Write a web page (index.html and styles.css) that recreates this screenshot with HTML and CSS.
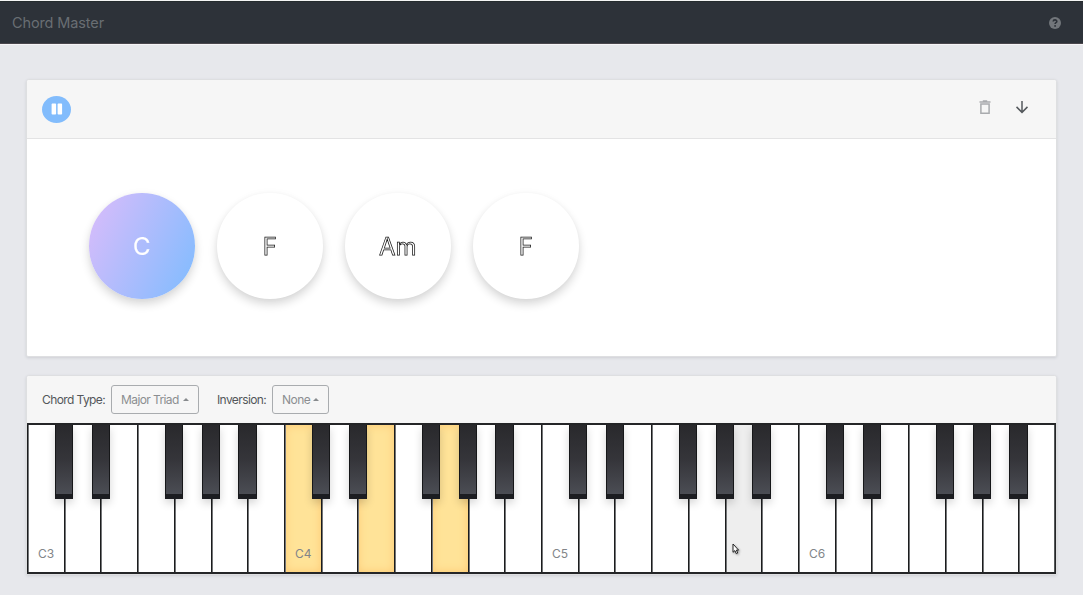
FILE: index.html
```html
<!DOCTYPE html>
<html lang="en">
<head>
<meta charset="utf-8">
<title>Chord Master</title>
<link rel="stylesheet" href="styles.css">
</head>
<body>
<header class="navbar">
  <span class="brand">Chord Master</span>
  <svg class="help" viewBox="0 0 12 12"><circle cx="6" cy="6" r="6"/><path d="M4.2 4.5C4.3 2.3 7.9 2.4 7.8 4.6C7.7 5.7 6.1 5.7 6.1 7"/><circle class="dot" cx="6.1" cy="8.9" r=".95"/></svg>
</header>
<main class="page">
  <section class="card">
    <div class="toolbar">
      <button class="pause" aria-label="Pause"><svg viewBox="0 0 12 12"><rect x=".6" y=".6" width="4.5" height="11" rx=".8"/><rect x="6.6" y=".6" width="4.5" height="11" rx=".8"/></svg></button>
      <div class="actions">
        <svg class="trash" viewBox="0 0 12 14"><path d="M.5 1.9H11.5M3.8 .9H8.2M1.9 4V13.2H10.1V4Z"/></svg>
        <svg class="arrow" viewBox="0 0 12 14"><path d="M6 1V12.4M.5 6.9L6 12.4L11.5 6.9"/></svg>
      </div>
    </div>
    <div class="chords">
      <div class="chord playing">C</div>
      <div class="chord">F</div>
      <div class="chord">Am</div>
      <div class="chord">F</div>
    </div>
  </section>
  <section class="card">
    <div class="options">
      <span class="label">Chord Type:</span><button class="select type">Major Triad<i class="caret"></i></button>
      <span class="label inversion">Inversion:</span><button class="select none">None<i class="caret"></i></button>
    </div>
    <div class="piano">
      <div class="key sharp">C3</div><div class="key sharp"></div><div class="key"></div><div class="key sharp"></div><div class="key sharp"></div><div class="key sharp"></div><div class="key"></div>
      <div class="key sharp on">C4</div><div class="key sharp"></div><div class="key on"></div><div class="key sharp"></div><div class="key sharp on"></div><div class="key sharp"></div><div class="key"></div>
      <div class="key sharp">C5</div><div class="key sharp"></div><div class="key"></div><div class="key sharp"></div><div class="key sharp"></div><div class="key sharp hover"><svg class="cursor" viewBox="0 0 8 12"><path d="M1 1V9.3L2.9 7.6L4.3 10.7L5.7 10L4.4 7.1H6.6Z"/></svg></div><div class="key"></div>
      <div class="key sharp">C6</div><div class="key sharp"></div><div class="key"></div><div class="key sharp"></div><div class="key sharp"></div><div class="key sharp"></div><div class="key"></div>
    </div>
  </section>
</main>
</body>
</html>
```
FILE: styles.css
```css
*, *::after { box-sizing: border-box; }
body { margin: 0; height: 595px; overflow: hidden; background: #e7e8ec; font-family: Inter, "Liberation Sans", sans-serif; color: #53565a; }
button { font: inherit; padding: 0; margin: 0; }
.navbar { height: 45px; padding: 0 22px 0 12px; display: flex; align-items: center; justify-content: space-between; background: #2d3239; border-top: 1px solid #f4f5f5; border-bottom: 1px solid #f6f4f6; box-shadow: inset 0 1px #252c2e, inset 0 -1px #4a474d; }
.brand { color: #696e73; font-size: 14.5px; letter-spacing: -.12px; }
.help { width: 12px; height: 12px; fill: #72767b; }
.help path { fill: none; stroke: #2d3239; stroke-width: 1.6; }
.help .dot { fill: #2d3239; }
.page { padding: 34px 26px 0; display: flex; flex-direction: column; gap: 18px; }
.card { border: 1px solid #dedfe1; border-radius: 3px 3px 2px 2px; background: #fff; box-shadow: 0 1px 3px rgba(40,45,60,.13); }
.toolbar { height: 59px; padding: 0 28px 0 15px; display: flex; align-items: center; justify-content: space-between; background: #f6f6f6; border-bottom: 1px solid #e3e3e4; border-radius: 2px 2px 0 0; }
.pause { width: 29px; height: 27px; border: 0; border-radius: 50%; background: #82bcfc; display: grid; place-items: center; }
.pause svg { width: 12px; height: 12px; fill: #fff; }
.actions { display: flex; gap: 25px; margin-bottom: 5px; }
.actions svg { width: 12px; height: 14px; fill: none; stroke-width: 1.5; }
.trash { stroke: #a9abae; }
.arrow { stroke: #55595d; }
.chords { height: 217px; padding: 54px 0 0 62px; display: flex; gap: 22.5px; }
.chord { width: 105.5px; height: 105.5px; padding-top: 2px; border-radius: 50%; display: grid; place-items: center; font-size: 24px; color: #fff; -webkit-text-stroke: .75px #111; box-shadow: 0 5px 10px rgba(0,0,0,.16), 0 0 8px rgba(0,0,0,.03); will-change: transform; }
.playing { background: linear-gradient(115deg, #d5bcfb 7%, #86bcfe 92%); -webkit-text-stroke: .2px #fff; }
.options { height: 47px; padding-left: 15px; display: flex; align-items: center; background: #f6f6f6; border-radius: 2px 2px 0 0; font-size: 12px; letter-spacing: -.6px; }
.label { width: 69px; white-space: nowrap; }
.inversion { width: 55px; margin-left: 18.5px; }
.select { height: 29px; padding: 0 9px; border: 1px solid #a9acaf; border-radius: 3px; background: transparent; color: #8b8e91; display: flex; align-items: center; justify-content: space-between; letter-spacing: -.5px; white-space: nowrap; }
.type { width: 87.5px; letter-spacing: -.6px; }
.none { width: 57px; }
.caret { border: 3.5px solid transparent; border-top: 0; border-bottom: 3px solid #888b8e; }
.piano { height: 151px; display: grid; grid-template-columns: repeat(28, 1fr); border: 2px solid #252628; border-left: 0; border-right-width: 1px; }
.key { position: relative; border-left: 1px solid #1b1c1d; box-shadow: inset 1px 0 #747678; padding: 121px 0 0 10px; font-size: 12px; line-height: 15px; color: #828589; background: #fff; }
.key:last-child { box-shadow: inset 1px 0 #747678, inset -1px 0 #55585a; }
.sharp::after { content: ""; position: absolute; z-index: 1; top: 0; right: -9.6px; width: 18.5px; height: 73.5px; border: 1px solid #161719; border-top: 0; border-bottom: 5px solid #1c1d21; background: linear-gradient(#29292c, #35353a 50%, #4b4d54); box-shadow: 0 4px 9px rgba(0,0,0,.17); }
.on { background: #ffe398; box-shadow: inset 1px 0 #747678, inset 0 0 10px #fdc974; }
.hover { background: #eee; }
.cursor { position: absolute; left: 6px; top: 118px; width: 8px; height: 12px; fill: #fff; stroke: #222; stroke-width: 1; filter: drop-shadow(1px 1px 1px #999); }
```
